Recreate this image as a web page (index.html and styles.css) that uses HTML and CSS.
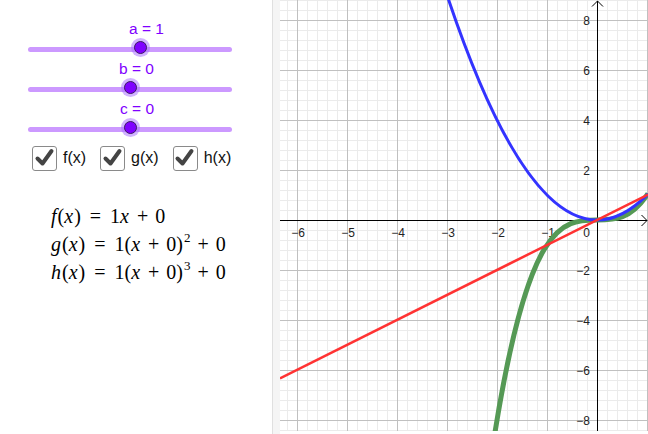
FILE: index.html
```html
<!DOCTYPE html>
<html>
<head>
<meta charset="utf-8">
<link rel="stylesheet" href="styles.css">
</head>
<body>
<div class="app">
  <div class="panel">
    <div class="slider">
      <div class="cap cap-a">a = 1</div>
      <div class="track"><span class="knob knob-a"></span></div>
    </div>
    <div class="slider">
      <div class="cap cap-b">b = 0</div>
      <div class="track"><span class="knob knob-b"></span></div>
    </div>
    <div class="slider">
      <div class="cap cap-c">c = 0</div>
      <div class="track"><span class="knob knob-c"></span></div>
    </div>
    <div class="checks">
      <label class="check"><span class="box"><svg viewBox="0 0 25 25" width="25" height="25"><path d="M5.5 13.5 L10.5 18.5 L19.5 6" fill="none" stroke="#444" stroke-width="4" stroke-linecap="round" stroke-linejoin="round"/></svg></span><span class="ctext">f(x)</span></label>
      <label class="check"><span class="box"><svg viewBox="0 0 25 25" width="25" height="25"><path d="M5.5 13.5 L10.5 18.5 L19.5 6" fill="none" stroke="#444" stroke-width="4" stroke-linecap="round" stroke-linejoin="round"/></svg></span><span class="ctext">g(x)</span></label>
      <label class="check"><span class="box"><svg viewBox="0 0 25 25" width="25" height="25"><path d="M5.5 13.5 L10.5 18.5 L19.5 6" fill="none" stroke="#444" stroke-width="4" stroke-linecap="round" stroke-linejoin="round"/></svg></span><span class="ctext">h(x)</span></label>
    </div>
    <div class="formulas">
      <div class="eq"><i>f</i>(<i>x</i>)<span class="rel">=</span>1<i>x</i><span class="bin">+</span>0</div>
      <div class="eq"><i>g</i>(<i>x</i>)<span class="rel">=</span>1(<i>x</i><span class="bin">+</span>0)<sup>2</sup><span class="bin">+</span>0</div>
      <div class="eq"><i>h</i>(<i>x</i>)<span class="rel">=</span>1(<i>x</i><span class="bin">+</span>0)<sup>3</sup><span class="bin">+</span>0</div>
    </div>
  </div>
  <div class="divider"></div>
  <div class="graph">
    <svg class="plot" width="368" height="431" viewBox="0 0 368 431">
      <defs>
        <pattern id="grid" patternUnits="userSpaceOnUse" x="17" y="20" width="50" height="50">
          <path d="M10.5 0V50M20.5 0V50M30.5 0V50M40.5 0V50M0 10.5H50M0 20.5H50M0 30.5H50M0 40.5H50" stroke="#ebebeb" stroke-width="1"/>
          <path d="M0.5 0V50M0 0.5H50" stroke="#c0c0c0" stroke-width="1"/>
        </pattern>
      </defs>
      <rect x="0" y="0" width="368" height="431" fill="#fff"/>
      <rect x="0" y="0" width="368" height="431" fill="url(#grid)"/>
      <path d="M0 220.5H367" stroke="#000" stroke-width="1"/>
      <path d="M361.5 215 L367 220.5 L361.5 226" fill="none" stroke="#000" stroke-width="1"/>
      <path d="M317.5 431V1" stroke="#000" stroke-width="1"/>
      <path d="M312 6.5 L317.5 1 L323 6.5" fill="none" stroke="#000" stroke-width="1"/>
      <g class="xl" text-anchor="middle">
        <text x="18" y="237">−6</text>
        <text x="68" y="237">−5</text>
        <text x="118" y="237">−4</text>
        <text x="168" y="237">−3</text>
        <text x="218" y="237">−2</text>
        <text x="268" y="237">−1</text>
      </g>
      <g class="xl" text-anchor="end">
        <text x="310" y="237">0</text>
        <text x="310" y="24.5">8</text>
        <text x="310" y="74.5">6</text>
        <text x="310" y="124.5">4</text>
        <text x="310" y="174.5">2</text>
        <text x="310" y="274.5">−2</text>
        <text x="310" y="324.5">−4</text>
        <text x="310" y="374.5">−6</text>
        <text x="310" y="424.5">−8</text>
      </g>
      <path d="M212 451.5 C264 107.5 316 274.6 368 193.5" fill="none" stroke="#559955" stroke-width="5"/>
      <path d="M168 -2 Q268 296 368 194" fill="none" stroke="#3333ff" stroke-width="3"/>
      <path d="M0 378.5 L368 194.5" fill="none" stroke="#ff3333" stroke-width="2.5"/>
    </svg>
  </div>
</div>
</body>
</html>
```
FILE: styles.css
```css
html, body {
  margin: 0;
  padding: 0;
  background: #fff;
}
.app {
  display: flex;
  width: 648px;
  height: 434px;
  overflow: hidden;
  font-family: "Liberation Sans", Arial, sans-serif;
}
.panel {
  width: 272px;
  flex: none;
  padding-top: 19px;
  box-sizing: border-box;
}
.slider {
  height: 40px;
}
.cap {
  height: 20px;
  line-height: 20px;
  font-size: 15.5px;
  color: #7f00ff;
}
.cap-a { padding-left: 129px; }
.cap-b { padding-left: 119px; }
.cap-c { padding-left: 120px; }
.track {
  position: relative;
  height: 20px;
  margin-left: 28px;
  width: 204px;
}
.track::before {
  content: "";
  position: absolute;
  left: 0;
  right: 0;
  top: 8px;
  height: 5px;
  border-radius: 3px;
  background: #cc99ff;
}
.knob {
  position: absolute;
  top: 2px;
  width: 11px;
  height: 11px;
  border-radius: 50%;
  background: #7f00ff;
  border: 1px solid #3a1a60;
  box-shadow: 0 0 0 3px rgba(170, 115, 255, 0.55);
}
.knob-a { left: 106px; }
.knob-b { left: 96px; }
.knob-c { left: 96px; }
.checks {
  display: flex;
  align-items: center;
  gap: 14px;
  margin-top: 6px;
  padding-left: 32px;
  height: 26px;
}
.check {
  display: flex;
  align-items: center;
  gap: 6px;
}
.box {
  display: block;
  width: 25px;
  height: 25px;
  box-sizing: border-box;
  border: 1.5px solid #8a8a8a;
  border-radius: 3px;
  background: #fff;
  position: relative;
}
.box svg {
  position: absolute;
  left: -1.5px;
  top: -1.5px;
}
.ctext {
  font-size: 16px;
  color: #111;
}
.formulas {
  margin-top: 31px;
  padding-left: 51px;
  font-family: "Liberation Serif", "Times New Roman", serif;
  font-size: 20px;
  color: #000;
}
.eq {
  height: 28px;
  line-height: 28px;
  white-space: nowrap;
}
.eq i {
  font-style: italic;
  margin-right: 1px;
}
.rel {
  margin: 0 9px;
}
.bin {
  margin: 0 7px;
}
.eq sup {
  font-size: 13px;
  vertical-align: 9px;
  line-height: 0;
  margin-left: 1px;
}
.divider {
  width: 8px;
  flex: none;
  box-sizing: border-box;
  background: #f5f5f5;
  border-left: 1px solid #e0e0e0;
  height: 434px;
}
.graph {
  width: 368px;
  flex: none;
  height: 434px;
  background: #fff;
}
.plot {
  display: block;
}
.xl text {
  font-family: "Liberation Sans", Arial, sans-serif;
  font-size: 12px;
  fill: #222;
}
```
